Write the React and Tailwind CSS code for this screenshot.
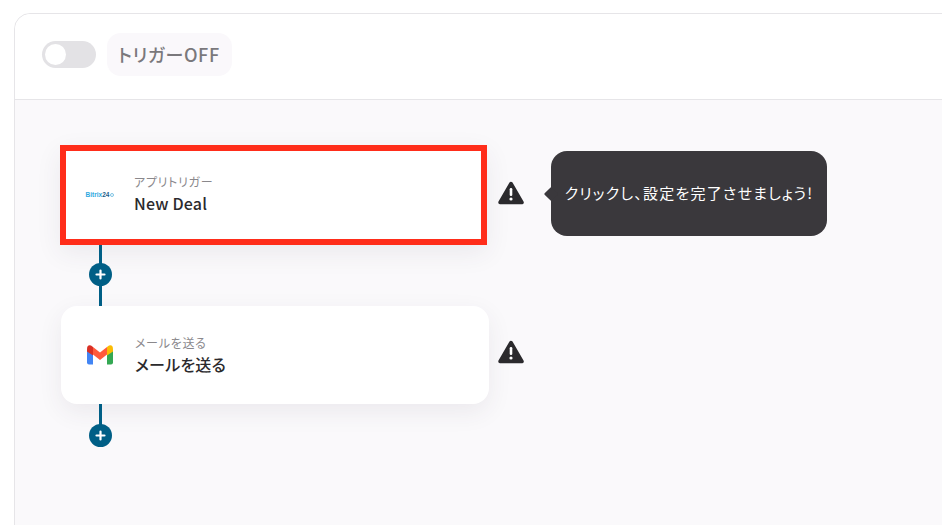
const jp = "font-['Noto_Sans_CJK_JP','Noto_Sans',sans-serif] [font-feature-settings:'palt']";

function WarningIcon() {
  return (
    <svg width="26" height="24" viewBox="0 0 26 24" className="shrink-0">
      <path
        d="M13 2.5 L24 21.5 H2 Z"
        fill="#2b2a2d"
        stroke="#2b2a2d"
        strokeWidth="3.5"
        strokeLinejoin="round"
      />
      <rect x="11.7" y="7" width="2.6" height="8" rx="1.2" fill="#fff" />
      <circle cx="13" cy="18" r="1.6" fill="#fff" />
    </svg>
  );
}

function GmailIcon() {
  return (
    <svg width="26" height="20" viewBox="0 0 26 20">
      <path d="M0 5 V17.5 Q0 19.5 2 19.5 H6 V8 Z" fill="#4285f4" />
      <path d="M20 8 V19.5 H24 Q26 19.5 26 17.5 V5 Z" fill="#34a853" />
      <path d="M6 2 V9.5 L13 15 L20 9.5 V2 L13 7.5 Z" fill="#ff5a3c" />
      <path d="M0 4.5 V6.5 L6 10.5 V2 L4 0.6 Q0 -0.6 0 4.5 Z" fill="#d93025" />
      <path d="M20 2 V10.5 L26 6.5 V4.5 Q26 -0.6 22 0.6 Z" fill="#fbbc04" />
    </svg>
  );
}

function BitrixLogo() {
  return (
    <span className="flex items-center font-['Liberation_Sans',sans-serif] text-[6.5px] leading-none font-bold">
      <span className="text-[#2fa8e0]">Bitrix</span>
      <span className="text-[#1f5f8b]">24</span>
      <span className="ml-[1px] size-[4px] rounded-full border-[0.5px] border-[#7fc4e4]" />
    </span>
  );
}

function CardBody({ icon, label, title, tight }) {
  return (
    <div className="flex h-full items-center">
      <div className="-mr-[4px] flex w-[78px] shrink-0 justify-center">{icon}</div>
      <div className={`${jp} flex flex-col ${tight ? "-mt-[2px] -ml-[1px]" : ""}`}>
        <span className="text-[12px] leading-[18px] tracking-[0.7px] text-[#8a888c]">{label}</span>
        <span className="text-[16px] leading-[24px] font-medium tracking-[0.2px] text-[#2b2a2d]">
          {title}
        </span>
      </div>
    </div>
  );
}

function Connector({ height, plusTop }) {
  return (
    <div className="relative ml-[28px] w-[23px]" style={{ height }}>
      <div className="mx-auto h-full w-[3px] bg-[#005f86]" />
      <div
        className="absolute left-0 flex size-[23px] items-center justify-center rounded-full bg-[#005f86]"
        style={{ top: plusTop }}
      >
        <svg width="11" height="11" viewBox="0 0 11 11">
          <path d="M5.5 1.5 V9.5 M1.5 5.5 H9.5" stroke="#fff" strokeWidth="2.2" strokeLinecap="round" />
        </svg>
      </div>
    </div>
  );
}

export default function App() {
  return (
    <div className="h-[525px] w-[942px] overflow-hidden bg-white pt-[13px] pl-[14px]">
      <div className="h-[600px] w-[1000px] rounded-tl-[16px] border border-[#e6e5e8]">
        {/* Header */}
        <div className="flex h-[86px] items-center rounded-tl-[16px] border-b border-[#e6e5e8] bg-white pb-[4px] pl-[27px]">
          <div className="flex h-[27px] w-[54px] items-center rounded-full bg-[#e3e2e5] px-[3px]">
            <div className="size-[21px] rounded-full bg-white" />
          </div>
          <div
            className={`${jp} ml-[11px] flex h-[43px] w-[125px] items-center rounded-[14px] bg-[#faf8fb] pl-[11px] text-[18px] font-medium tracking-[0.6px] text-[#7a787c]`}
          >
            トリガーOFF
          </div>
        </div>

        {/* Flow */}
        <div className="h-full bg-[#faf9fb] pt-[45px] pl-[46px]">
          <div className="flex h-[100px] items-center">
            <div className="-ml-[1px] h-[100px] w-[427px] border-[6px] border-[#ff2d1a] bg-white shadow-[0_8px_24px_rgba(60,50,80,0.08)]">
              <div className="-ml-[5px] h-full">
                <CardBody icon={<BitrixLogo />} label="アプリトリガー" title="New Deal" tight />
              </div>
            </div>
            <div className="-mt-[5px] ml-[11px]">
              <WarningIcon />
            </div>
            <div className="relative -mt-[3px] ml-[27px] flex h-[85px] w-[276px] items-center justify-center rounded-[16px] bg-[#3a383c]">
              <div className="absolute top-1/2 -left-[5px] size-[10px] -translate-y-1/2 rotate-45 rounded-[1px] bg-[#3a383c]" />
              <span className={`${jp} text-[15px] tracking-[1.2px] text-white`}>
                クリックし、設定を完了させましょう!
              </span>
            </div>
          </div>

          <Connector height={61} plusTop={18} />

          <div className="flex h-[98px] items-center">
            <div className="h-[98px] w-[428px] rounded-[16px] bg-white shadow-[0_8px_24px_rgba(60,50,80,0.08)]">
              <CardBody icon={<GmailIcon />} label="メールを送る" title="メールを送る" />
            </div>
            <div className="-mt-[7px] ml-[9px]">
              <WarningIcon />
            </div>
          </div>

          <Connector height={43} plusTop={20} />
        </div>
      </div>
    </div>
  );
}
